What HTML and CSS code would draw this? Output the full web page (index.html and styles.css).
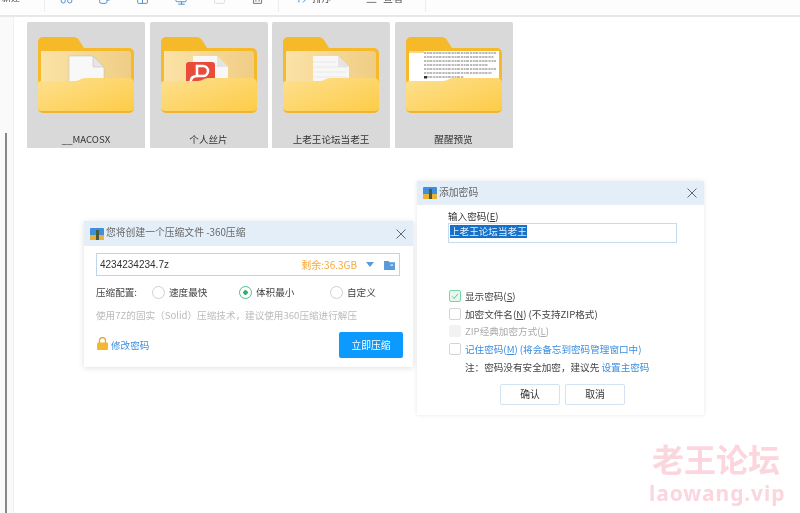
FILE: index.html
```html
<!DOCTYPE html>
<html lang="zh">
<head>
<meta charset="utf-8">
<title>压缩</title>
<link rel="stylesheet" href="styles.css">
</head>
<body>
<svg class="defs" width="0" height="0" aria-hidden="true">
  <defs>
    <linearGradient id="front" x1="0" y1="0" x2="1" y2="1"><stop offset="0" stop-color="#fde08f"/><stop offset="1" stop-color="#fdcb45"/></linearGradient>
    <linearGradient id="inner" x1="0" y1="0" x2="1" y2="0"><stop offset="0" stop-color="#fbe2a6"/><stop offset="1" stop-color="#efcd85"/></linearGradient>
    <symbol id="folder-back" viewBox="0 0 96 76">
      <path d="M0 5a5 5 0 0 1 5-5h30q4 0 6 3l5 8h45a5 5 0 0 1 5 5v50H0z" fill="#f6b92a"/>
      <path d="M3 14h87a3 3 0 0 1 3 3v30H3z" fill="url(#inner)"/>
    </symbol>
    <symbol id="folder-front" viewBox="0 0 96 76">
      <path d="M0 47a3 3 0 0 1 3-3h34q3 0 6-2 2-1 5-1h43a5 5 0 0 1 5 5v25a5 5 0 0 1-5 5H5a5 5 0 0 1-5-5z" fill="url(#front)"/>
      <path d="M0 71a5 5 0 0 0 5 5h86a5 5 0 0 0 5-5v-1a4 4 0 0 1-4 4H4a4 4 0 0 1-4-4z" fill="#f0b432"/>
    </symbol>
  </defs>
</svg>

<header class="toolbar">
  <span class="tool-text tool-new">新建</span>
  <span class="divider"></span>
  <div class="tool-icons">
    <svg class="tool-icon" viewBox="0 0 16 16"><circle cx="4" cy="11" r="2.6"/><circle cx="12" cy="11" r="2.6"/><path d="M5 9l5-8M11 9L6 1"/></svg>
    <svg class="tool-icon" viewBox="0 0 16 16"><rect x="2" y="4" width="9" height="10" rx="2"/><path d="M6 4V2h8v8h-3"/></svg>
    <svg class="tool-icon" viewBox="0 0 16 16"><rect x="2" y="2" width="12" height="12" rx="1"/><path d="M8 2v12"/></svg>
    <svg class="tool-icon" viewBox="0 0 16 16"><rect x="1" y="3" width="13" height="9" rx="2"/><path d="M8 12v3M4 15h8"/></svg>
    <svg class="tool-icon tool-icon-dim" viewBox="0 0 16 16"><rect x="2" y="2" width="12" height="12" rx="1"/></svg>
    <svg class="tool-icon tool-icon-grey" viewBox="0 0 16 16"><path d="M3 4h10v10H3zM6 7v5M10 7v5"/></svg>
  </div>
  <span class="divider"></span>
  <div class="tool-group tool-sort">
    <svg class="tool-icon" viewBox="0 0 16 16"><path d="M2 5l4-4 4 4M6 1v13M14 11l-3 3"/></svg>
    <span class="tool-text">排序</span>
  </div>
  <div class="tool-group tool-view">
    <svg class="tool-icon tool-icon-grey" viewBox="0 0 16 16"><path d="M2 5h12M2 10h12M2 14h12"/></svg>
    <span class="tool-text">查看</span>
  </div>
  <span class="divider"></span>
</header>

<div class="content">
  <div class="rail"><span class="rail-thumb"></span></div>
  <main class="grid">
    <article class="card">
      <div class="folder">
        <svg class="folder-layer" viewBox="0 0 96 76"><use href="#folder-back"/>
          <path d="M31 19h24l11 11v20H31z" fill="#f8f8f8" stroke="#bbb" stroke-width=".5"/><path d="M55 19l11 11H55z" fill="#e6e6e6" stroke="#bbb" stroke-width=".5"/>
          <use href="#folder-front"/></svg>
      </div>
      <p class="card-name">__MACOSX</p>
    </article>
    <article class="card">
      <div class="folder">
        <svg class="folder-layer" viewBox="0 0 96 76"><use href="#folder-back"/>
          <path d="M32 19h24l11 11v20H32z" fill="#f8f8f8"/><path d="M56 19l11 11H56z" fill="#e3e3e3"/>
          <rect x="25" y="25" width="29" height="26" rx="3" fill="#ea4a3a"/>
          <path d="M36 29h6a5 5 0 0 1 0 10h-6zM36 39c-5 0-7 3-6 8" fill="none" stroke="#fff" stroke-width="2.6"/>
          <use href="#folder-front"/></svg>
      </div>
      <p class="card-name">个人丝片</p>
    </article>
    <article class="card">
      <div class="folder">
        <svg class="folder-layer" viewBox="0 0 96 76"><use href="#folder-back"/>
          <path d="M30 19h25l11 11v20H30z" fill="#f7f7f7"/><path d="M55 19l11 11H55z" fill="#e4e4e4"/>
          <path d="M30 25h23M30 30h34M30 35h34M30 40h34M30 45h34" stroke="#e2e2e2" stroke-width=".7"/>
          <use href="#folder-front"/></svg>
      </div>
      <p class="card-name">上老王论坛当老王</p>
    </article>
    <article class="card">
      <div class="folder">
        <svg class="folder-layer" viewBox="0 0 96 76"><use href="#folder-back"/>
          <rect x="3" y="14" width="90" height="33" fill="#fff"/>
          <rect x="3" y="14" width="15" height="2" fill="#f6d98c"/>
          <path d="M18 16h72M18 20h70M18 24h72M18 28h64M18 32h72M18 36h68M18 40h40" stroke="#666" stroke-width=".9" stroke-dasharray="2.300 .7 1.800 .5 3 .9"/>
          <rect x="18" y="39" width="3" height="2.500" fill="#333"/>
          <use href="#folder-front"/></svg>
      </div>
      <p class="card-name">醒醒预览</p>
    </article>
  </main>
</div>

<section class="dialog dialog-compress">
  <div class="titlebar">
    <svg class="app-icon" viewBox="0 0 14 14"><rect y="1" width="14" height="12" rx="1" fill="#3f8fdc"/><rect y="8" width="14" height="5" fill="#e8b13a"/><rect x="6" y="3" width="3" height="10" fill="#4a5a3a"/></svg>
    <span class="title-text">您将创建一个压缩文件 -360压缩</span>
    <svg class="close" viewBox="0 0 10 10"><path d="M.5.5l9 9M9.500.5l-9 9"/></svg>
  </div>
  <div class="compress-body">
    <div class="path-field">
      <span class="path-name">4234234234.7z</span>
      <span class="path-free">剩余:36.3GB</span>
      <span class="caret"></span>
      <svg class="browse" viewBox="0 0 12 11"><path d="M0 1h5l1 1.500h6V11H0z" fill="#5b9ad8"/><rect x="7" y="5" width="3" height="1.200" fill="#fff"/></svg>
    </div>
    <div class="config-row">
      <span class="config-label">压缩配置:</span>
      <label class="radio-item radio-a"><span class="radio"></span>速度最快</label>
      <label class="radio-item radio-b"><span class="radio radio-on"></span>体积最小</label>
      <label class="radio-item"><span class="radio"></span>自定义</label>
    </div>
    <p class="hint">使用7Z的固实（Solid）压缩技术，建议使用360压缩进行解压</p>
    <div class="compress-foot">
      <svg class="lock" viewBox="0 0 11 13"><path d="M2.500 6V3.500a3 3 0 0 1 6 0V6" fill="none" stroke="#d9a93a" stroke-width="1.300"/><rect y="5.500" width="11" height="7.500" rx="1" fill="#f6b62e"/></svg>
      <a class="link change-pw">修改密码</a>
      <button class="primary">立即压缩</button>
    </div>
  </div>
</section>

<section class="dialog dialog-password">
  <div class="titlebar titlebar-pw">
    <svg class="app-icon" viewBox="0 0 14 14"><rect y="1" width="14" height="12" rx="1" fill="#3f8fdc"/><rect y="8" width="14" height="5" fill="#e8b13a"/><rect x="6" y="3" width="3" height="10" fill="#4a5a3a"/></svg>
    <span class="title-text">添加密码</span>
    <svg class="close" viewBox="0 0 10 10"><path d="M.5.5l9 9M9.500.5l-9 9"/></svg>
  </div>
  <div class="pw-body">
    <label class="pw-label">输入密码(<u>E</u>)</label>
    <div class="pw-input"><span class="selected">上老王论坛当老王</span></div>
    <div class="checks">
      <label class="check-row"><span class="check check-on"><svg viewBox="0 0 12 12"><path d="M2.500 6.500l2.500 2.500 4.500-5.500"/></svg></span><span>显示密码(<u>S</u>)</span></label>
      <label class="check-row"><span class="check"></span><span>加密文件名(<u>N</u>) (不支持ZIP格式)</span></label>
      <label class="check-row check-row-off"><span class="check check-off"></span><span>ZIP经典加密方式(<u>L</u>)</span></label>
      <label class="check-row link"><span class="check"></span><span>记住密码(<u>M</u>) (将会备忘到密码管理窗口中)</span></label>
    </div>
    <p class="note">注：密码没有安全加密，建议先 <a class="link">设置主密码</a></p>
    <div class="buttons">
      <button class="ghost">确认</button>
      <button class="ghost">取消</button>
    </div>
  </div>
</section>

<aside class="watermark">
  <div class="wm-cn">老王论坛</div>
  <div class="wm-en">laowang.vip</div>
</aside>
</body>
</html>
```
FILE: styles.css
```css
* { box-sizing: border-box; }
html, body { margin: 0; height: 513px; overflow: hidden; background: #fff; }
body { position: relative; width: 800px; font-family: "Noto Sans CJK SC", "Liberation Sans", sans-serif; color: #333; filter: blur(.35px); }
.defs { position: absolute; }
.toolbar { height: 17px; display: flex; align-items: flex-end; overflow: hidden; padding-bottom: 11px; border-bottom: 2px solid #e8e8e8; background: #fdfdfd; }
.tool-text { font-size: 10px; line-height: 12px; color: #444; white-space: nowrap; }
.tool-new { margin-left: 2px; width: 42px; font-size: 9px; }
.divider { width: 1px; height: 24px; background: #eee; flex: none; margin-bottom: -8px; }
.tool-icons { display: flex; gap: 25.200px; margin-left: 15px; width: 218px; margin-bottom: -1px; }
.tool-icon { width: 13px; height: 13px; flex: none; fill: none; stroke: #4d8fd0; stroke-width: 1.200; }
.tool-icon-dim { stroke: #ddd; }
.tool-icon-grey { stroke: #777; }
.tool-group { display: flex; align-items: flex-end; gap: 5px; }
.tool-sort { margin-left: 15px; width: 71px; }
.tool-view { width: 60px; }
.content { display: flex; height: 496px; }
.rail { width: 14px; flex: none; border-right: 1px solid #f0f0f0; background: #fafafa; padding: 116px 0 0 5px; }
.rail-thumb { display: block; width: 2px; height: 380px; background: #888; }
.grid { display: grid; grid-template-columns: repeat(4, 118px); column-gap: 4.500px; padding: 5px 0 0 13px; align-content: start; }
.card { height: 126px; background: #d9d9d9; border-radius: 2px 2px 0 0; display: flex; flex-direction: column; align-items: center; padding-top: 15px; }
.folder { width: 96px; height: 76px; flex: none; }
.folder-layer { width: 96px; height: 76px; display: block; }
.card-name { margin: 19px 0 0; font-size: 9.600px; line-height: 14px; color: #333; white-space: nowrap; }
.dialog { position: absolute; background: #fff; box-shadow: 0 1px 6px rgba(0,0,0,.13); }
.dialog-compress { left: 84px; top: 221px; width: 329px; height: 146px; }
.dialog-password { left: 417px; top: 181px; width: 287px; height: 234px; box-shadow: 0 0 4px rgba(0,0,0,.1); }
.titlebar { height: 25px; background: #e3eef9; display: flex; align-items: center; padding: 0 7px 0 6px; }
.titlebar-pw { height: 24px; }
.app-icon { width: 14px; height: 14px; flex: none; margin-right: 2px; }
.title-text { flex: 1; font-size: 9.800px; line-height: 12px; margin-bottom: 3px; color: #666; }
.close { width: 10px; height: 10px; flex: none; fill: none; stroke: #666; stroke-width: 1; }
.compress-body { padding: 7px 13px 0 12px; font-size: 9.600px; }
.path-field { height: 23px; border: 1px solid #bdd4ea; display: flex; align-items: center; padding: 0 4px 0 3px; }
.path-name { flex: 1; font-size: 10px; color: #333; font-family: "Liberation Sans", sans-serif; }
.path-free { font-size: 10px; color: #f5a93c; }
.caret { width: 0; height: 0; margin: 0 10px 0 9px; border: 4.500px solid transparent; border-top: 5px solid #5b9ad8; border-bottom: 0; }
.browse { width: 11px; height: 10px; flex: none; }
.config-row { display: flex; align-items: center; margin-top: 8px; height: 16px; color: #444; }
.config-label { width: 56px; }
.radio-item { display: flex; align-items: center; gap: 4px; }
.radio-a { width: 87px; }
.radio-b { width: 91px; }
.radio { width: 13px; height: 13px; border-radius: 50%; border: 1px solid #cfcfcf; flex: none; background: #fff; }
.radio-on { border-color: #49c28a; background: radial-gradient(circle, #27b46e 0 2px, #fff 2.500px); }
.hint { margin: 8px 0 0; font-size: 9.600px; line-height: 15px; color: #bbb; white-space: nowrap; }
.compress-foot { display: flex; align-items: center; margin-top: 9px; height: 26px; }
.lock { width: 11px; height: 13px; flex: none; margin: -3px 3px 0 1px; }
.link { color: #3a8ee0; }
.change-pw { flex: 1; }
.primary { width: 64px; height: 26px; margin-right: -3px; border: 0; border-radius: 2px; background: #0c9aff; color: #fff; font: 9.800px "Noto Sans CJK SC", sans-serif; }
.pw-body { padding: 5px 27px 0 31px; font-size: 9.600px; }
.pw-label { display: block; height: 13px; line-height: 13px; color: #333; }
.pw-input { width: 229px; height: 20px; border: 1px solid #c5dbef; margin-top: 0; padding: 0 0 0 1px; }
.selected { display: inline-block; background: #1672c9; color: #e9f2ff; font-size: 9.600px; line-height: 13px; }
.checks { margin-top: 44px; padding-left: 1px; }
.check-row { display: flex; align-items: center; gap: 4px; height: 17.700px; color: #444; white-space: nowrap; }
.check-row u { text-underline-offset: 1px; }
.check-row-off { color: #aaa; }
.check-row.link { color: #3a8ee0; }
.check { width: 12px; height: 12px; border: 1px solid #d4d4d4; border-radius: 2px; flex: none; background: #fff; }
.check-on { border-color: #7bd3a8; background: #e6f7ef; }
.check-on svg { display: block; fill: none; stroke: #49b883; stroke-width: 1; }
.check-off { background: #f2f2f2; border-color: #f2f2f2; }
.note { margin: 2px 0 0 17px; line-height: 15px; color: #444; white-space: nowrap; }
.buttons { display: flex; gap: 5px; margin: 9px 0 0 52px; }
.ghost { width: 60px; height: 21px; border: 1px solid #d4e3f1; border-radius: 2px; background: #fff; color: #333; font: 9.800px "Noto Sans CJK SC", sans-serif; padding: 0; }
.watermark { position: absolute; left: 649px; top: 438px; width: 134px; text-align: center; color: #fcd6de; font-weight: 700; }
.wm-cn { font-size: 32px; line-height: 41px; white-space: nowrap; }
.wm-en { font-family: "Noto Sans", sans-serif; font-size: 21px; line-height: 24px; margin-top: 2px; letter-spacing: .9px; white-space: nowrap; }
```
